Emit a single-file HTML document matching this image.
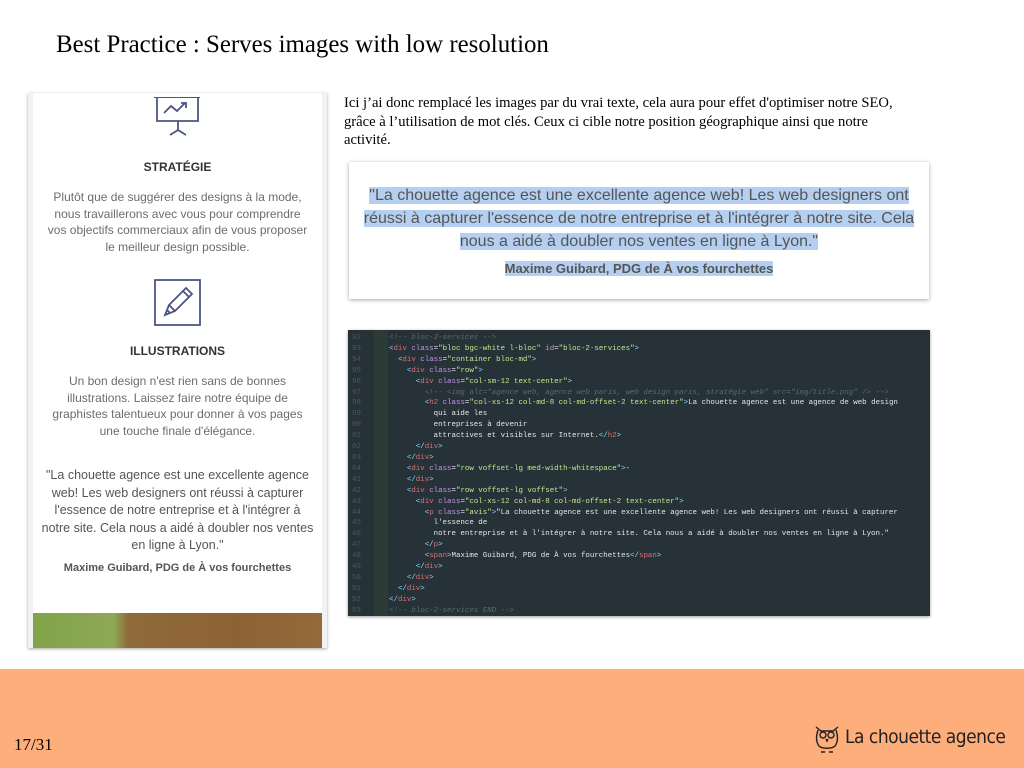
<!DOCTYPE html>
<html><head><meta charset="utf-8"><style>
body{margin:0;width:1024px;height:768px;background:#fff;position:relative;overflow:hidden;font-family:"Liberation Sans",sans-serif}
.abs{position:absolute}
h1{position:absolute;left:56px;top:31px;margin:0;font:400 24.9px "Liberation Serif",serif;color:#000;white-space:nowrap}
#left{left:28px;top:93px;width:299px;height:555px;background:#f2f2f2;box-shadow:0 1px 3px rgba(0,0,0,.35)}
#inner{position:absolute;left:5px;top:0;width:289px;height:555px;background:#fff;text-align:center;color:#6c6c6c;font-size:12px;line-height:16.5px}
.t{font-weight:bold;color:#333;font-size:12px}
#intro{left:344px;top:94px;width:600px;font:14.6px/18.5px "Liberation Serif",serif;color:#000;white-space:nowrap}
#quote{left:349px;top:162px;width:580px;height:137px;background:#fff;box-shadow:0 1px 4px rgba(0,0,0,.35);text-align:center}
.hl{background:#b4cff0}
#code{left:348px;top:330px;width:582px;height:286px;background:#263238;box-shadow:0 1px 3px rgba(0,0,0,.4);font:7.45px/10.9px "Liberation Mono",monospace;color:#e6e6e6;overflow:hidden}
#code pre{margin:0;position:absolute;left:41px;top:3px;font:inherit;white-space:pre}
.ln{position:absolute;left:4px;top:3px;color:#4a5a60;white-space:pre}
.c{color:#5a6a70;font-style:italic}.g{color:#e06c75}.a{color:#c792ea}.s{color:#c3e88d}.p{color:#89ddff}
#foot{left:0;top:669px;width:1024px;height:99px;background:#fdae7b}
</style></head><body>
<h1>Best Practice : Serves images with low resolution</h1>
<div id="left" class="abs"><div id="inner">
<div class="abs" style="left:121px;top:4px;width:46px;height:1px;background:#4a5584"></div>
<svg class="abs" style="left:121px;top:4px" width="48" height="48" viewBox="0 0 48 48" fill="none" stroke="#4a5584" stroke-width="1.8"><path d="M3 0V24H44V0"/><path d="M10 16l7-7 6 5 8-8"/><path d="M27 6h5v5"/><path d="M24 24v9M24 33l-8 5M24 33l8 5"/></svg>
<div class="abs t" style="left:0;width:289px;top:66px">STRATÉGIE</div>
<div class="abs" style="left:0;width:289px;top:96px">Plutôt que de suggérer des designs à la mode,<br>nous travaillerons avec vous pour comprendre<br>vos objectifs commerciaux afin de vous proposer<br>le meilleur design possible.</div>
<svg class="abs" style="left:121px;top:186px" width="47" height="47" viewBox="0 0 47 47" fill="none" stroke="#4a5584" stroke-width="1.8"><rect x="1" y="1" width="45" height="45"/><path d="M11 36l4-10 17-17 6 6-17 17z"/><path d="M15 26l6 6M29 12l6 6M13 31l3 3"/></svg>
<div class="abs t" style="left:0;width:289px;top:250px">ILLUSTRATIONS</div>
<div class="abs" style="left:0;width:289px;top:280px">Un bon design n'est rien sans de bonnes<br>illustrations. Laissez faire notre équipe de<br>graphistes talentueux pour donner à vos pages<br>une touche finale d'élégance.</div>
<div class="abs" style="left:0;width:289px;top:374px;font-size:12.5px;line-height:17.5px;color:#555">"La chouette agence est une excellente agence<br>web! Les web designers ont réussi à capturer<br>l'essence de notre entreprise et à l'intégrer à<br>notre site. Cela nous a aidé à doubler nos ventes<br>en ligne à Lyon."</div>
<div class="abs t" style="left:0;width:289px;top:467px;font-size:11px;color:#555">Maxime Guibard, PDG de À vos fourchettes</div>
<div class="abs" style="left:0;top:520px;width:289px;height:35px;background:linear-gradient(90deg,#82a34a 0,#8fa856 28%,#8f6a3a 33%,#8d6336 70%,#946a3a 100%)"></div>
</div></div>
<div id="intro" class="abs">Ici j’ai donc remplacé les images par du vrai texte, cela aura pour effet d'optimiser notre SEO,<br>grâce à l’utilisation de mot clés. Ceux ci cible notre position géographique ainsi que notre<br>activité.</div>
<div id="quote" class="abs">
<div style="margin-top:22px;font-size:16px;line-height:23px;color:#555"><span class="hl">"La chouette agence est une excellente agence web! Les web designers ont<br>réussi à capturer l'essence de notre entreprise et à l'intégrer à notre site. Cela<br>nous a aidé à doubler nos ventes en ligne à Lyon."</span></div>
<div style="margin-top:8px;font-size:13px;font-weight:bold;color:#555"><span class="hl">Maxime Guibard, PDG de À vos fourchettes</span></div>
</div>
<div id="code" class="abs">
<div class="abs" style="left:26px;top:0;width:14px;height:286px;background:#2c3b36"></div>
<div class="ln">92
93
94
95
96
97
98
99
00
01
02
03
04
41
42
43
44
45
46
47
48
49
50
51
52
53</div>
<pre><span class="c">&lt;!-- bloc-2-services --&gt;</span>
<span class="p">&lt;</span><span class="g">div</span> <span class="a">class</span>=<span class="s">"bloc bgc-white l-bloc"</span> <span class="a">id</span>=<span class="s">"bloc-2-services"</span><span class="p">&gt;</span>
  <span class="p">&lt;</span><span class="g">div</span> <span class="a">class</span>=<span class="s">"container bloc-md"</span><span class="p">&gt;</span>
    <span class="p">&lt;</span><span class="g">div</span> <span class="a">class</span>=<span class="s">"row"</span><span class="p">&gt;</span>
      <span class="p">&lt;</span><span class="g">div</span> <span class="a">class</span>=<span class="s">"col-sm-12 text-center"</span><span class="p">&gt;</span>
        <span class="c">&lt;!-- &lt;img alt="agence web, agence web paris, web design paris, stratégie web" src="img/title.png" /&gt; --&gt;</span>
        <span class="p">&lt;</span><span class="g">h2</span> <span class="a">class</span>=<span class="s">"col-xs-12 col-md-8 col-md-offset-2 text-center"</span><span class="p">&gt;</span>La chouette agence est une agence de web design
          qui aide les
          entreprises à devenir
          attractives et visibles sur Internet.<span class="p">&lt;/</span><span class="g">h2</span><span class="p">&gt;</span>
      <span class="p">&lt;/</span><span class="g">div</span><span class="p">&gt;</span>
    <span class="p">&lt;/</span><span class="g">div</span><span class="p">&gt;</span>
    <span class="p">&lt;</span><span class="g">div</span> <span class="a">class</span>=<span class="s">"row voffset-lg med-width-whitespace"</span><span class="p">&gt;</span>-
    <span class="p">&lt;/</span><span class="g">div</span><span class="p">&gt;</span>
    <span class="p">&lt;</span><span class="g">div</span> <span class="a">class</span>=<span class="s">"row voffset-lg voffset"</span><span class="p">&gt;</span>
      <span class="p">&lt;</span><span class="g">div</span> <span class="a">class</span>=<span class="s">"col-xs-12 col-md-8 col-md-offset-2 text-center"</span><span class="p">&gt;</span>
        <span class="p">&lt;</span><span class="g">p</span> <span class="a">class</span>=<span class="s">"avis"</span><span class="p">&gt;</span>"La chouette agence est une excellente agence web! Les web designers ont réussi à capturer
          l'essence de
          notre entreprise et à l'intégrer à notre site. Cela nous a aidé à doubler nos ventes en ligne à Lyon."
        <span class="p">&lt;/</span><span class="g">p</span><span class="p">&gt;</span>
        <span class="p">&lt;</span><span class="g">span</span><span class="p">&gt;</span>Maxime Guibard, PDG de À vos fourchettes<span class="p">&lt;/</span><span class="g">span</span><span class="p">&gt;</span>
      <span class="p">&lt;/</span><span class="g">div</span><span class="p">&gt;</span>
    <span class="p">&lt;/</span><span class="g">div</span><span class="p">&gt;</span>
  <span class="p">&lt;/</span><span class="g">div</span><span class="p">&gt;</span>
<span class="p">&lt;/</span><span class="g">div</span><span class="p">&gt;</span>
<span class="c">&lt;!-- bloc-2-services END --&gt;</span></pre>
</div>
<div id="foot" class="abs">
<div class="abs" style="left:14px;top:66px;font:17px 'Liberation Serif',serif;color:#000">17/31</div>
<svg class="abs" style="left:814px;top:55px" width="26" height="30" viewBox="0 0 26 30" fill="none" stroke="#222" stroke-width="1.4"><path d="M2 3l5 4h12l5-4"/><path d="M4 6c-2 6-2 12 1 16 3 3 13 3 16 0 3-4 3-10 1-16"/><circle cx="9" cy="11" r="3"/><circle cx="17" cy="11" r="3"/><path d="M12 15l1 2 1-2"/><path d="M7 28h4M15 28h4"/></svg>
<div class="abs" style="left:845px;top:57px;font:19px 'DejaVu Sans Condensed','DejaVu Sans',sans-serif;color:#222;white-space:nowrap;letter-spacing:-.5px">La chouette agence</div>
</div>
</body></html>
